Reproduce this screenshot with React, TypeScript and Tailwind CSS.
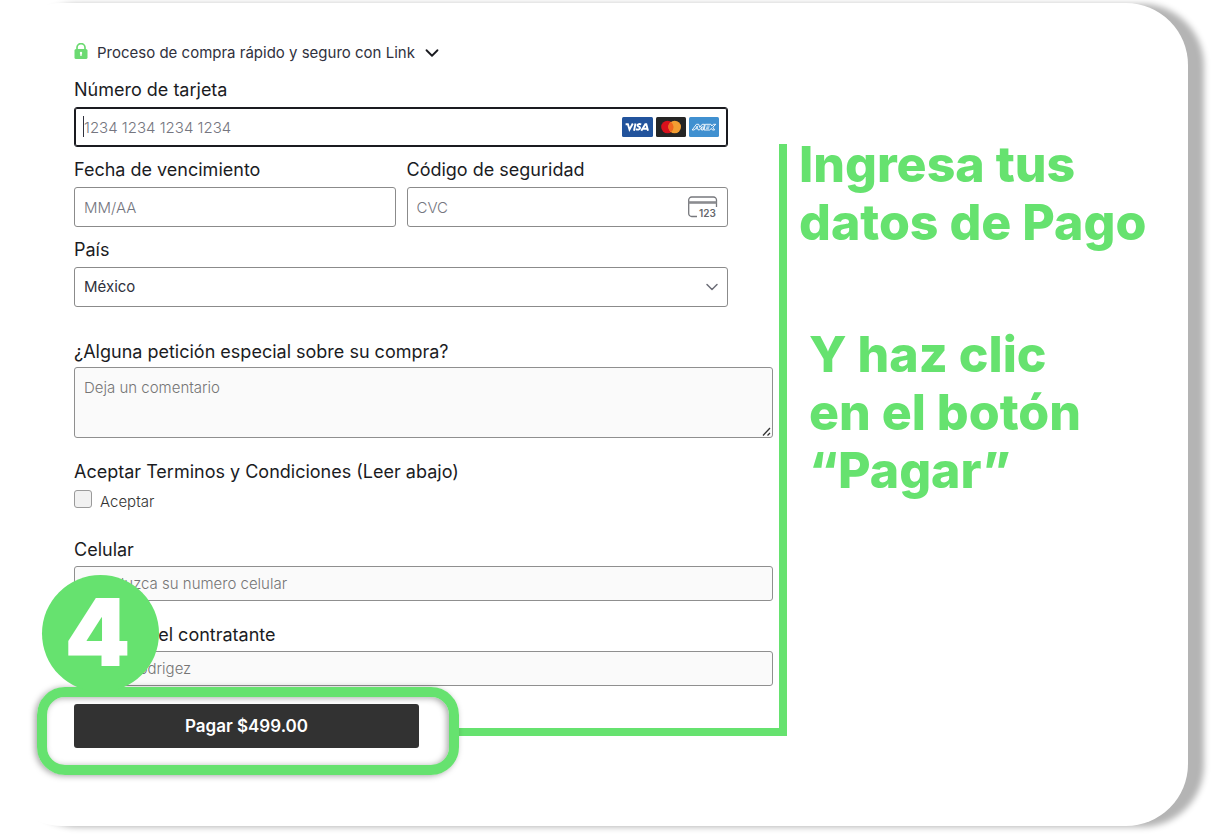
import React from 'react';
import { ChevronDown } from 'lucide-react';

const LABEL = 'block text-lg leading-6 font-normal text-[#1b1c1f]';
const STRIPE_FIELD = 'block w-full h-10 rounded-[3px] border px-[9px] bg-white text-[15px] text-[#30313d] placeholder:text-[#757680] placeholder:font-light outline-none';
const FIELD = 'block w-full rounded-[3px] border border-[#8f8f8f] bg-[#fafafa] px-[9px] text-[15px] text-[#30313d] placeholder:text-[#757575] placeholder:font-light outline-none';

const LockIcon: React.FC = () => (
  <svg width="14" height="16" viewBox="0 0 14 16" className="mb-1" aria-hidden="true">
    <path d="M3 7V4.600a4 4 0 0 1 8 0V7" fill="none" stroke="#6cda72" strokeWidth="1.700" />
    <rect x="0.500" y="6" width="13" height="10" rx="1.600" fill="#6cda72" />
    <circle cx="7" cy="10" r="1.200" fill="#fff" />
    <path d="M6.400 10h1.200l.3 2.800H6.100z" fill="#fff" />
  </svg>
);

const VisaIcon: React.FC = () => (
  <svg width="31" height="20" viewBox="0 0 31 20" aria-hidden="true">
    <rect width="31" height="20" rx="1.500" fill="#22539c" />
    <g fill="none" stroke="#fff" strokeWidth="1.900">
      <path d="M3.600 7.200h2.300l1.600 5.400L10.800 6.500" />
      <path d="M13.500 6.500l-1.500 7.200" />
      <path d="M19.200 7.500c-1.600-.8-3.700-.5-3.700.8 0 1.400 2.700 1.200 2.600 2.700-.1 1.800-2.700 1.900-4.200 1.200" />
      <path d="M19.300 13.700l4-6.400h1l1.700 6.400M21.200 11.700h4" />
    </g>
  </svg>
);

const MastercardIcon: React.FC = () => (
  <svg width="30" height="20" viewBox="0 0 30 20" aria-hidden="true">
    <rect width="30" height="20" rx="1.500" fill="#252525" />
    <circle cx="11.500" cy="10" r="6.300" fill="#d8101c" />
    <circle cx="18.700" cy="10" r="6.300" fill="#f39e32" />
    <path d="M15 4.900a6.300 6.300 0 0 1 0 10.200a6.300 6.300 0 0 1 0-10.200z" fill="#f0661f" />
  </svg>
);

const AmexIcon: React.FC = () => (
  <svg width="30" height="20" viewBox="0 0 30 20" aria-hidden="true">
    <rect width="30" height="20" rx="1.500" fill="#4090d0" />
    <g fill="none" stroke="#fff" strokeWidth="0.900" strokeLinejoin="round">
      <path d="M3.200 13L7.400 7.300h2.300l1 3.100 2.500-3.100h2.300l-1.300 5.700h-1.700l.7-3.400-2.700 3.400H9.300l-.4-1.300H6.300L5.300 13z" />
      <path d="M7.300 10.500h1.200l-.3-1.400z" />
      <path d="M16.300 7.300h5.600l.9 1.700 1.500-1.700h2.500l-3 2.900 1.800 2.800h-2.200l-1-1.600-1.700 1.600h-5.700z" />
      <path d="M17.700 9h3.200M17.300 10.300h3M17 11.600h2.800" strokeWidth="0.700" />
    </g>
  </svg>
);

const CvcIcon: React.FC = () => (
  <svg width="32" height="26" viewBox="0 0 32 26" aria-hidden="true">
    <path d="M10 22.500H4.700A3 3 0 0 1 1.700 19.500V6a3 3 0 0 1 3-3H26.500a3 3 0 0 1 3 3V13" fill="none" stroke="#77787d" strokeWidth="1.300" />
    <path d="M1.500 8.500h28" stroke="#8b8c90" strokeWidth="2.600" />
    <text x="12" y="23" fontSize="10" fontWeight="600" fill="#66676c" fontFamily="Inter, sans-serif">123</text>
  </svg>
);

const StripeFields: React.FC = () => (
  <div className="mr-[45px]">
    <button type="button" className="flex items-center text-[15px] leading-6 text-[#30313d]">
      <LockIcon />
      <span className="ml-[9px]">Proceso de compra rápido y seguro con Link</span>
      <ChevronDown size={22} strokeWidth={2} className="ml-1.5 text-[#1a1b20]" />
    </button>

    <div className="mt-[13px]">
      <label htmlFor="card" className={LABEL}>Número de tarjeta</label>
      <div className="relative mt-[5px]">
        <input id="card" className={`${STRIPE_FIELD} border-[#1a1b20] ring-1 ring-inset ring-[#1a1b20]`} placeholder="1234 1234 1234 1234" />
        <span className="absolute left-[9px] top-[9px] h-[21px] w-px bg-[#30313d]" />
        <div className="absolute right-[9px] inset-y-0 flex items-center gap-[3px]">
          <VisaIcon />
          <MastercardIcon />
          <AmexIcon />
        </div>
      </div>
    </div>

    <div className="mt-[11px] grid grid-cols-2 gap-[11px]">
      <div>
        <label htmlFor="expiry" className={LABEL}>Fecha de vencimiento</label>
        <input id="expiry" className={`${STRIPE_FIELD} mt-[5px] border-[#8b8b8b]`} placeholder="MM/AA" />
      </div>
      <div>
        <label htmlFor="cvc" className={LABEL}>Código de seguridad</label>
        <div className="relative mt-[5px]">
          <input id="cvc" className={`${STRIPE_FIELD} border-[#8b8b8b]`} placeholder="CVC" />
          <div className="absolute right-[9px] inset-y-0 flex items-center">
            <CvcIcon />
          </div>
        </div>
      </div>
    </div>

    <div className="mt-[11px]">
      <label htmlFor="country" className={LABEL}>País</label>
      <div className="relative mt-[5px]">
        <select id="country" className={`${STRIPE_FIELD} appearance-none border-[#8b8b8b]`} defaultValue="MX">
          <option value="MX">México</option>
        </select>
        <ChevronDown size={20} strokeWidth={1.8} className="absolute right-[6px] top-[10px] text-[#6d6e78] pointer-events-none" />
      </div>
    </div>
  </div>
);

const PayButton: React.FC = () => (
  <div className="relative mt-[18px] w-[345px]">
    <div className="absolute -left-[37px] -right-10 -top-[17px] -bottom-[27px] rounded-[28px] border-10 border-[#66e26f] shadow-[-2px_1px_6px_rgba(0,0,0,0.35),inset_-2px_1px_6px_rgba(0,0,0,0.35)] pointer-events-none" />
    <button type="submit" className="relative block w-full h-11 rounded-[3px] bg-[#323232] pt-0.5 text-[17px] font-semibold text-white">
      Pagar $499.00
    </button>
    <div className="absolute -left-8 bottom-14 flex size-[117px] items-center justify-center rounded-full bg-[#66e26f] pr-1.5 pb-1 text-[94px] leading-none font-black text-white">
      4
    </div>
  </div>
);

const PaymentForm: React.FC = () => (
  <form className="relative flex-1 pl-[74px] pr-[14px] pt-[38px]" onSubmit={(e) => e.preventDefault()}>
    {/* line that joins the pay button to the instructions */}
    <div className="absolute left-[458px] right-0 top-[141px] bottom-[90px] border-r-8 border-b-8 border-[#66e26f] pointer-events-none" />
    <div className="relative">
      <StripeFields />

      <div className="mt-[33px]">
        <label htmlFor="comment" className={LABEL}>¿Alguna petición especial sobre su compra?</label>
        <div className="relative mt-[3px]">
          <textarea id="comment" className={`${FIELD} h-[71px] py-[9px] resize-none`} placeholder="Deja un comentario" />
          <svg width="9" height="9" viewBox="0 0 9 9" className="absolute right-[2px] bottom-[2px]" aria-hidden="true">
            <path d="M1 8.500L8 1M5.500 8.500L8 6" stroke="#333" strokeWidth="1.300" />
          </svg>
        </div>
      </div>

      <fieldset className="mt-[22px]">
        <legend className={LABEL}>Aceptar Terminos y Condiciones (Leer abajo)</legend>
        <label className="mt-1 flex h-7 items-center gap-2 text-[15px] font-light text-[#333]">
          <input type="checkbox" className="mb-1.5 size-[18px] appearance-none rounded-[3px] border border-[#9a9a9a] bg-[#f1f1f1]" />
          Aceptar
        </label>
      </fieldset>

      <div className="mt-[22px]">
        <label htmlFor="phone" className={LABEL}>Celular</label>
        <input id="phone" type="tel" className={`${FIELD} mt-1 h-[35px]`} placeholder="Introduzca su numero celular" />
      </div>

      <div className="mt-[22px]">
        <label htmlFor="holder" className={LABEL}>Nombre del contratante</label>
        <input id="holder" className={`${FIELD} mt-1 h-[35px]`} placeholder="Pedro Rodrigez" />
      </div>

      <PayButton />
    </div>
  </form>
);

const Instructions: React.FC = () => (
  <aside className="w-[401px] shrink-0 pl-3 pt-[132px] text-[50px] leading-[58px] font-extrabold text-[#66e26f]">
    <p>Ingresa tus<br />datos de Pago</p>
    <p className="mt-[74px] pl-[10px]">Y haz clic<br />en el botón<br />“Pagar”</p>
  </aside>
);

const App: React.FC = () => {
  return (
    <main className="flex min-h-screen overflow-hidden bg-white pt-[3px] pr-[23px] pb-[9px] font-['Inter',sans-serif]">
      <div className="flex flex-1 rounded-[62px] bg-white shadow-[16px_1px_6px_#b4b4b4]">
        <PaymentForm />
        <Instructions />
      </div>
    </main>
  );
};

export default App;
